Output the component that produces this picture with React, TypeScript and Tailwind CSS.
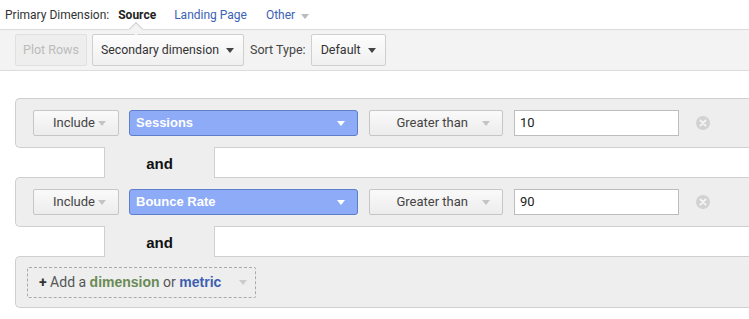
import React from 'react';

function Caret({ className = 'border-t-[#999]' }: { className?: string }) {
  return <span className={`inline-block w-0 h-0 border-x-[4px] border-x-transparent border-t-[5px] ${className}`} />;
}

function RemoveIcon() {
  return (
    <svg width="14" height="14" viewBox="0 0 14 14" className="ml-[17px]">
      <circle cx="7" cy="7" r="7" fill="#d2d2d2" />
      <path d="M4.5 4.5 L9.5 9.5 M9.5 4.5 L4.5 9.5" stroke="#f4f4f4" strokeWidth="2" strokeLinecap="round" />
    </svg>
  );
}

function FilterRow({ metric, value }: { metric: string; value: string }) {
  return (
    <div className="h-[50px] flex items-center pl-[17px] rounded-l-[5px] border border-r-0 border-[#cfcfcf] bg-[#eeeeee]">
      <div className="flex items-center">
        <div className="w-[86px] h-[26px] flex items-center justify-end gap-[3px] pr-[12px] rounded-[2px] border border-[#c6c6c6] bg-gradient-to-b from-[#fafafa] to-[#ececec] text-[13px] text-[#444]">
          <span>Include</span>
          <Caret className="border-t-[#c4c4c4]" />
        </div>
        <div className="ml-[10px] w-[229px] h-[26px] flex items-center justify-between pl-[6px] pr-[12px] rounded-[3px] border border-[#5f7ec9] bg-[#8eabf8] text-[13px] font-bold text-white font-['Liberation_Sans',Arial,sans-serif]">
          <span>{metric}</span>
          <Caret className="border-t-white" />
        </div>
        <div className="ml-[11px] w-[134px] h-[26px] flex items-center justify-end gap-[14px] pr-[12px] rounded-[2px] border border-[#c6c6c6] bg-gradient-to-b from-[#fafafa] to-[#ececec] text-[13px] text-[#444]">
          <span>Greater than</span>
          <Caret className="border-t-[#c4c4c4]" />
        </div>
        <div className="ml-[11px] w-[165px] h-[26px] flex items-center pl-[5px] border border-[#bdbdbd] bg-white text-[13px] text-[#222]">
          {value}
        </div>
        <RemoveIcon />
      </div>
    </div>
  );
}

function AndConnector() {
  return (
    <div className="h-[29px] flex">
      <div className="relative z-10 -my-px ml-[89px] w-[111px] border-x border-[#cfcfcf] bg-[#eeeeee] flex items-center justify-center pt-[3px] text-[15px] font-bold text-[#111] font-['Liberation_Sans',Arial,sans-serif]">
        and
      </div>
    </div>
  );
}

export default function App() {
  return (
    <div className="w-[749px] h-[319px] overflow-hidden bg-white font-['Roboto','Liberation_Sans',Arial,sans-serif]">
      <div className="h-[29px] flex items-center pl-[5px] text-[12px] text-[#333]">
        <span>Primary Dimension:</span>
        <span className="ml-[9px] font-bold text-[#222]">Source</span>
        <span className="ml-[18px] text-[#3b62b5]">Landing Page</span>
        <span className="ml-[19px] text-[#3b62b5]">Other</span>
        <span className="ml-[6px] mt-[1px]">
          <Caret className="border-t-[#bbb]" />
        </span>
      </div>

      <div className="relative h-[42px] flex items-center pl-[15px] border-y border-[#dcdcdc] bg-[#f3f3f3]">
        <span className="absolute left-[131px] -top-[6px] w-[10px] h-[10px] rotate-45 border-l border-t border-[#d0d0d0] bg-[#f3f3f3]" />
        <div className="w-[72px] h-[32px] flex items-center justify-center rounded-[2px] border border-[#e0e0e0] bg-[#eeeeee] text-[12.5px] text-[#bbb]">
          Plot Rows
        </div>
        <div className="ml-[5px] w-[152px] h-[32px] flex items-center justify-between pl-[8px] pr-[9px] rounded-[2px] border border-[#cfcfcf] bg-gradient-to-b from-[#fdfdfd] to-[#f0f0f0] text-[12.3px] text-[#333]">
          <span>Secondary dimension</span>
          <Caret className="border-t-[#444]" />
        </div>
        <span className="ml-[6px] text-[12.5px] text-[#444]">Sort Type:</span>
        <div className="ml-[5px] w-[75px] h-[32px] flex items-center justify-between pl-[9px] pr-[9px] rounded-[2px] border border-[#cfcfcf] bg-gradient-to-b from-[#fdfdfd] to-[#f0f0f0] text-[12.5px] text-[#333]">
          <span>Default</span>
          <Caret className="border-t-[#444]" />
        </div>
      </div>

      <div className="mt-[27px] ml-[15px] flex flex-col">
        <FilterRow metric="Sessions" value="10" />
        <AndConnector />
        <FilterRow metric="Bounce Rate" value="90" />
        <AndConnector />
        <div className="h-[52px] flex items-center pl-[11px] rounded-l-[5px] border border-r-0 border-[#cfcfcf] bg-[#eeeeee]">
          <div className="w-[229px] h-[31px] flex items-center justify-between pl-[11px] pr-[8px] rounded-[2px] border border-dashed border-[#aaa] text-[14px] text-[#555]">
            <span>
              <span className="font-bold text-[#333]">+</span> Add a{' '}
              <span className="font-bold text-[#6a8a55] font-['Liberation_Sans',Arial,sans-serif]">dimension</span> or{' '}
              <span className="font-bold text-[#3d5fae] font-['Liberation_Sans',Arial,sans-serif]">metric</span>
            </span>
            <Caret className="border-t-[#ccc]" />
          </div>
        </div>
      </div>
    </div>
  );
}
